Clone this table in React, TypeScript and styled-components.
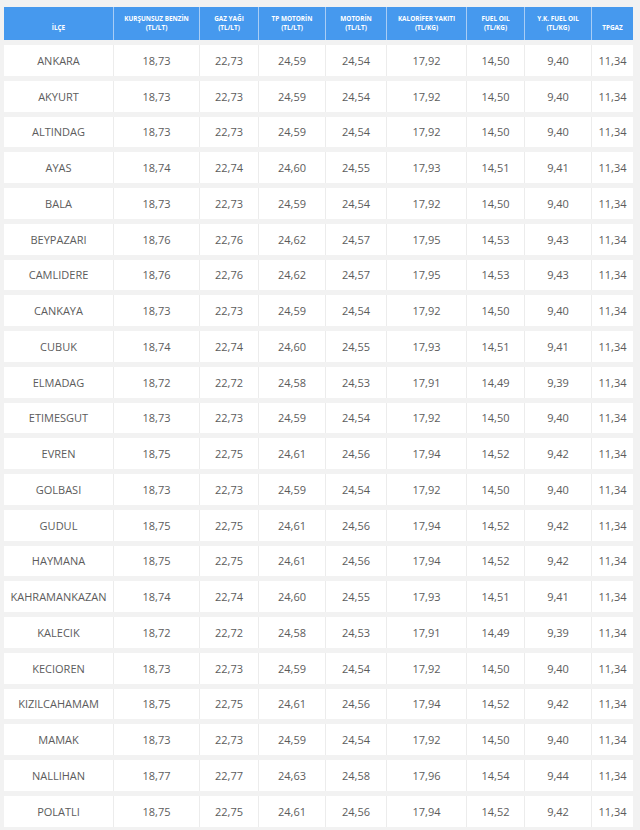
import React from "react";
import styled, { createGlobalStyle } from "styled-components";

const Global = createGlobalStyle`
  html, body { margin: 0; padding: 0; background: #f2f2f2; }
  body { font-family: "Open Sans", "Liberation Sans", sans-serif; }
`;

const Page = styled.div`
  padding: 2px 7px 0 4px;
`;

const Table = styled.table`
  width: 629px;
  table-layout: fixed;
  border-collapse: separate;
  border-spacing: 0 5px;
`;

const HeadCell = styled.th`
  background: #4699ee;
  color: #ffffff;
  font-size: 6.4px;
  font-weight: 700;
  line-height: 9px;
  height: 33px;
  padding: 0 2px 8px;
  box-sizing: border-box;
  vertical-align: bottom;
  text-align: center;
  text-transform: uppercase;
  border-left: 1px solid #a9cdf5;
  &:first-child { border-left: none; }
`;

const Cell = styled.td`
  background: #ffffff;
  color: #5c5c5c;
  font-size: 11px;
  height: 30.76px;
  padding: 0;
  box-sizing: border-box;
  text-align: center;
  vertical-align: middle;
  border-left: 1px solid #ececec;
  &:first-child { border-left: none; }
`;

const cols: { label: string; unit?: string; w: number }[] = [
  { label: "İLÇE", w: 109 },
  { label: "KURŞUNSUZ BENZİN", unit: "(TL/LT)", w: 86 },
  { label: "GAZ YAĞI", unit: "(TL/LT)", w: 59 },
  { label: "TP MOTORİN", unit: "(TL/LT)", w: 67 },
  { label: "MOTORİN", unit: "(TL/LT)", w: 61 },
  { label: "KALORİFER YAKITI", unit: "(TL/KG)", w: 80 },
  { label: "FUEL OIL", unit: "(TL/KG)", w: 58 },
  { label: "Y.K. FUEL OIL", unit: "(TL/KG)", w: 67 },
  { label: "TPGAZ", w: 42 },
];

const rows: string[][] = [
  ["ANKARA", "18,73", "22,73", "24,59", "24,54", "17,92", "14,50", "9,40", "11,34"],
  ["AKYURT", "18,73", "22,73", "24,59", "24,54", "17,92", "14,50", "9,40", "11,34"],
  ["ALTINDAG", "18,73", "22,73", "24,59", "24,54", "17,92", "14,50", "9,40", "11,34"],
  ["AYAS", "18,74", "22,74", "24,60", "24,55", "17,93", "14,51", "9,41", "11,34"],
  ["BALA", "18,73", "22,73", "24,59", "24,54", "17,92", "14,50", "9,40", "11,34"],
  ["BEYPAZARI", "18,76", "22,76", "24,62", "24,57", "17,95", "14,53", "9,43", "11,34"],
  ["CAMLIDERE", "18,76", "22,76", "24,62", "24,57", "17,95", "14,53", "9,43", "11,34"],
  ["CANKAYA", "18,73", "22,73", "24,59", "24,54", "17,92", "14,50", "9,40", "11,34"],
  ["CUBUK", "18,74", "22,74", "24,60", "24,55", "17,93", "14,51", "9,41", "11,34"],
  ["ELMADAG", "18,72", "22,72", "24,58", "24,53", "17,91", "14,49", "9,39", "11,34"],
  ["ETIMESGUT", "18,73", "22,73", "24,59", "24,54", "17,92", "14,50", "9,40", "11,34"],
  ["EVREN", "18,75", "22,75", "24,61", "24,56", "17,94", "14,52", "9,42", "11,34"],
  ["GOLBASI", "18,73", "22,73", "24,59", "24,54", "17,92", "14,50", "9,40", "11,34"],
  ["GUDUL", "18,75", "22,75", "24,61", "24,56", "17,94", "14,52", "9,42", "11,34"],
  ["HAYMANA", "18,75", "22,75", "24,61", "24,56", "17,94", "14,52", "9,42", "11,34"],
  ["KAHRAMANKAZAN", "18,74", "22,74", "24,60", "24,55", "17,93", "14,51", "9,41", "11,34"],
  ["KALECIK", "18,72", "22,72", "24,58", "24,53", "17,91", "14,49", "9,39", "11,34"],
  ["KECIOREN", "18,73", "22,73", "24,59", "24,54", "17,92", "14,50", "9,40", "11,34"],
  ["KIZILCAHAMAM", "18,75", "22,75", "24,61", "24,56", "17,94", "14,52", "9,42", "11,34"],
  ["MAMAK", "18,73", "22,73", "24,59", "24,54", "17,92", "14,50", "9,40", "11,34"],
  ["NALLIHAN", "18,77", "22,77", "24,63", "24,58", "17,96", "14,54", "9,44", "11,34"],
  ["POLATLI", "18,75", "22,75", "24,61", "24,56", "17,94", "14,52", "9,42", "11,34"],
];

export default function App() {
  return (
    <>
      <Global />
      <Page>
        <Table>
          <colgroup>
            {cols.map((c) => (
              <col key={c.label} style={{ width: c.w }} />
            ))}
          </colgroup>
          <thead>
            <tr>
              {cols.map((c) => (
                <HeadCell key={c.label}>
                  {c.label}
                  {c.unit && (
                    <>
                      <br />
                      {c.unit}
                    </>
                  )}
                </HeadCell>
              ))}
            </tr>
          </thead>
          <tbody>
            {rows.map((r) => (
              <tr key={r[0]}>
                {r.map((v, i) => (
                  <Cell key={i}>{v}</Cell>
                ))}
              </tr>
            ))}
          </tbody>
        </Table>
      </Page>
    </>
  );
}
